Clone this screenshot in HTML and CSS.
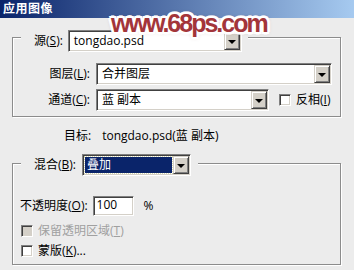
FILE: index.html
```html
<!DOCTYPE html>
<html lang="zh">
<head>
    <meta charset="UTF-8">
    <title>应用图像</title>
    <link rel="stylesheet" href="styles.css">
</head>
<body>

    <div class="titlebar">应用图像</div>
    <div class="watermark">www.68ps.com</div>

    <div class="dialog">
        <div class="group group-source">
            <div class="legend">
                <label class="legend-label">源(<u>S</u>):</label>
                <div class="combo combo-source">
                    <span class="value">tongdao.psd</span>
                    <span class="drop"><i class="arrow"></i></span>
                </div>
            </div>
            <div class="row row-layer">
                <label class="lbl">图层(<u>L</u>):</label>
                <div class="combo combo-layer">
                    <span class="value">合并图层</span>
                    <span class="drop"><i class="arrow"></i></span>
                </div>
            </div>
            <div class="row row-channel">
                <label class="lbl">通道(<u>C</u>):</label>
                <div class="combo combo-channel">
                    <span class="value">蓝 副本</span>
                    <span class="drop"><i class="arrow"></i></span>
                </div>
                <span class="check check-invert"><i class="box"></i>反相(<u>I</u>)</span>
            </div>
        </div>

        <div class="target"><span class="target-key">目标:</span>tongdao.psd(蓝 副本)</div>

        <div class="group group-blend">
            <div class="legend legend-blend">
                <label class="legend-label">混合(<u>B</u>):</label>
                <div class="combo combo-blend">
                    <span class="value selected">叠加</span>
                    <span class="drop"><i class="arrow"></i></span>
                </div>
            </div>
            <div class="opacity-row">
                <label class="opacity-label">不透明度(<u>O</u>):</label>
                <div class="field">100</div>
                <span class="percent">%</span>
            </div>
            <div class="check check-row disabled"><i class="box"></i>保留透明区域(<u>T</u>)</div>
            <div class="check check-row"><i class="box"></i>蒙版(<u>K</u>)...</div>
        </div>
    </div>

</body>
</html>
```

FILE: styles.css
```css
* {
    box-sizing: border-box;
}
body {
    margin: 0;
    width: 354px;
    height: 270px;
    overflow: hidden;
    position: relative;
    background-color: #ececec;
    color: #000;
    font-family: "Open Sans", "Noto Sans CJK SC", sans-serif;
    font-size: 12px;
    line-height: 16px;
}
.titlebar {
    height: 18px;
    padding-left: 3px;
    background: linear-gradient(to right, #0a246a, #a6caf0);
    color: #fff;
    font-weight: bold;
    line-height: 18px;
    letter-spacing: 0.5px;
}
.watermark {
    position: absolute;
    left: 111px;
    top: 14px;
    font-family: "Liberation Sans", sans-serif;
    font-weight: bold;
    font-size: 25px;
    line-height: 18px;
    letter-spacing: -2px;
    color: #a3353a;
    text-shadow: -2px 0 #fff, 2px 0 #fff, 0 -2px #fff, 0 2px #fff,
        -2px -2px #fff, 2px -2px #fff, -2px 2px #fff, 2px 2px #fff,
        -3px 0 rgba(255, 255, 255, 0.7), 3px 0 rgba(255, 255, 255, 0.7),
        0 3px rgba(255, 255, 255, 0.7), 0 -3px rgba(255, 255, 255, 0.7),
        0 0 4px rgba(120, 40, 40, 0.5);
}
.dialog {
    padding: 0 13px 0 12px;
}
.group {
    border: 1px solid #8c8c8c;
    box-shadow: inset 1px 1px 0 #fff, 1px 1px 0 #fff;
}
.group-source {
    margin-top: 19px;
    padding-bottom: 5px;
}
.legend {
    display: inline-flex;
    align-items: center;
    height: 22px;
    margin: -8px 0 0 8px;
    padding: 0 6px 0 13px;
    background-color: #ececec;
    vertical-align: top;
}
.legend-label {
    margin-right: 5px;
}
.combo {
    display: flex;
    height: 22px;
    background-color: #fff;
    border: 1px solid;
    border-color: #808080 #fff #fff #808080;
    box-shadow: inset 1px 1px 0 #404040, inset -1px -1px 0 #d4d0c8;
    padding: 1px;
}
.combo .value {
    flex: 1;
    padding-left: 4px;
    line-height: 18px;
    white-space: nowrap;
}
.combo .value.selected {
    margin: 1px;
    padding-left: 2px;
    line-height: 16px;
    background-color: #0a246a;
    color: #fff;
    outline: 1px dotted #d8d8b0;
}
.drop {
    width: 16px;
    display: flex;
    align-items: center;
    justify-content: center;
    background-color: #d4d0c8;
    border: 1px solid;
    border-color: #d4d0c8 #404040 #404040 #d4d0c8;
    box-shadow: inset 1px 1px 0 #fff, inset -1px -1px 0 #808080;
}
.arrow {
    width: 0;
    height: 0;
    margin-top: 1px;
    border-left: 4px solid transparent;
    border-right: 4px solid transparent;
    border-top: 4px solid #000;
}
.combo-source {
    width: 174px;
}
.row {
    display: flex;
    align-items: center;
    height: 22px;
}
.row-layer {
    margin-top: 9px;
}
.row-channel {
    margin-top: 4px;
}
.lbl {
    width: 77px;
    margin-right: 6px;
    text-align: right;
}
.combo-layer {
    width: 236px;
}
.combo-channel {
    width: 173px;
}
.check {
    display: flex;
    align-items: center;
}
.box {
    width: 12px;
    height: 12px;
    margin-right: 5px;
    background-color: #fff;
    border: 1px solid;
    border-color: #808080 #fff #fff #808080;
    box-shadow: inset 1px 1px 0 #404040, inset -1px -1px 0 #d4d0c8;
}
.check-invert {
    margin-left: 10px;
}
.target {
    margin-top: 11px;
    padding-left: 52px;
}
.target-key {
    margin-right: 11px;
}
.group-blend {
    margin-top: 19px;
    height: 102px;
}
.legend-blend {
    margin-top: -10px;
    padding-right: 7px;
}
.legend-blend .legend-label {
    margin-right: 6px;
}
.combo-blend {
    width: 109px;
}
.opacity-row {
    display: flex;
    align-items: center;
    height: 20px;
    margin-top: 16px;
    padding-left: 7px;
}
.opacity-label {
    margin-right: 5px;
}
.field {
    width: 41px;
    height: 20px;
    padding-left: 3px;
    line-height: 16px;
    background-color: #fff;
    border: 1px solid;
    border-color: #808080 #fff #fff #808080;
    box-shadow: inset 1px 1px 0 #404040, inset -1px -1px 0 #d4d0c8;
}
.percent {
    margin-left: 10px;
}
.check-row {
    height: 16px;
    margin-top: 7px;
    padding-left: 8px;
}
.check-row + .check-row {
    margin-top: 4px;
}
.check-row.disabled {
    color: #a0a0a0;
}
.check-row.disabled .box {
    background-color: #d4d0c8;
}
```
